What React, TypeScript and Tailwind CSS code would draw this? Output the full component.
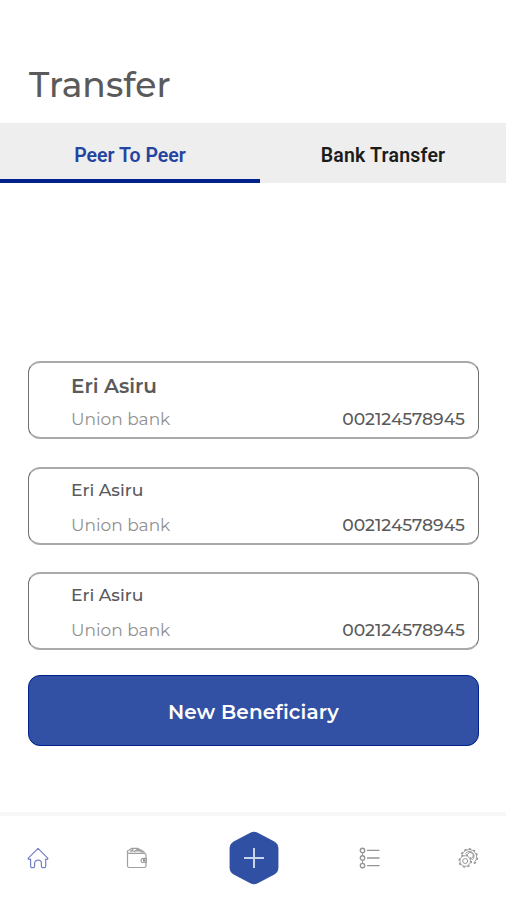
import React from 'react';
import clsx from 'clsx';

const beneficiaries = [
  { id: 1, name: 'Eri Asiru', bank: 'Union bank', account: '002124578945', selected: true },
  { id: 2, name: 'Eri Asiru', bank: 'Union bank', account: '002124578945', selected: false },
  { id: 3, name: 'Eri Asiru', bank: 'Union bank', account: '002124578945', selected: false },
];

const HomeIcon = () => (
  <svg width="22" height="22" viewBox="0 0 22 22" fill="none" stroke="#7480ca" strokeWidth="1.2" strokeLinejoin="round">
    <path d="M1.3 11.2 11 1.4l9.7 9.8c.5.7-.5 1.5-2 .9v7.2c0 .8-.5 1.3-1.3 1.3h-1.7c-.8 0-1.3-.5-1.3-1.3v-3.1c0-4-6.8-4-6.8 0v3.1c0 .8-.5 1.3-1.3 1.3H4.9c-.8 0-1.3-.5-1.3-1.3v-7.2c-1.8.5-2.8-.2-2.3-.9Z" />
  </svg>
);

const WalletIcon = () => (
  <svg width="22" height="22" viewBox="0 0 22 22" fill="none" stroke="#a0a0a0" strokeWidth="1.2" strokeLinejoin="round">
    <path d="M1.5 4.5v14.2c0 1.2.6 1.8 1.8 1.8h14.9c1.1 0 1.8-.6 1.8-1.8V8.2c0-1.2-.6-1.8-1.8-1.8H3.4C1 6.4.8 4 2.4 3.4" />
    <path d="M2.4 3.4 5.5 1.4h6l6.5 3.4v1.6M4.5 5l2.7-3M8 5l3-2.5 5.5 3M4 4h9" />
    <path d="M20.4 11.3h-3.6c-2.2 0-2.2 4.2 0 4.2h3.6Z" />
    <path d="M18 12.2v2.4" stroke="#777" strokeWidth="1.8" />
  </svg>
);

const ListIcon = () => (
  <svg width="22" height="22" viewBox="0 0 22 22" fill="none" stroke="#959595" strokeWidth="1.4">
    <circle cx="3.5" cy="3.4" r="2.2" />
    <circle cx="3.5" cy="11" r="2.2" />
    <circle cx="3.5" cy="18.6" r="2.2" />
    <path d="M3.5 5.6v3.2M3.5 13.2v3.2" strokeWidth="1" />
    <path d="M8 3.4h12.5M8 11h12.5M8 18.6h12.5" />
  </svg>
);

const GearsIcon = () => (
  <svg width="22" height="22" viewBox="0 0 22 22" fill="none" stroke="#8c8c8c">
    <circle cx="7.2" cy="14" r="5.3" strokeWidth=".8" />
    <circle cx="7.2" cy="14" r="6.2" strokeWidth="1.2" strokeDasharray="2.2 2.67" />
    <circle cx="7.2" cy="14" r="2.5" strokeWidth=".9" />
    <path d="M4.2 7.5A7.4 7.4 0 1 1 15.5 16" strokeWidth=".8" />
    <path d="M3.5 7A8.3 8.3 0 1 1 16 17" strokeWidth="1.3" strokeDasharray="2.3 2.3" />
    <path d="M7.5 6.7a4.6 4.6 0 1 1 6.5 6.2M9.4 7.5a3 3 0 1 1 4 3.8" strokeWidth=".9" />
  </svg>
);

const AddButton = () => (
  <button aria-label="Add">
    <svg width="52" height="56" viewBox="0 0 52 56" fill="none">
      <path d="M22.5 3.1Q26 1.1 29.5 3.1L46.5 12Q50 14 50 18v20q0 4-3.5 6L29.5 52.9Q26 54.9 22.5 52.9L5.5 44Q2 42 2 38V18q0-4 3.5-6Z" fill="#3050a3" stroke="#2c4ba1" strokeWidth=".8" />
      <path d="M26 18v20M16 28h20" stroke="#c9d3ec" strokeWidth="2" />
    </svg>
  </button>
);

const App = () => {
  return (
    <div className="flex h-[900px] w-[506px] flex-col bg-white font-['Montserrat','Inter',sans-serif] text-[#5a5a5a]">
      {/* Header */}
      <header className="flex h-[123px] items-end px-[29px] pb-[17px]">
        <h1 className="text-[34.5px] leading-[42px] font-medium tracking-[0.1px] whitespace-nowrap">Transfer</h1>
      </header>

      {/* Tabs */}
      <div className="flex h-[60px] bg-[#eee] font-['Roboto',sans-serif] text-[19.5px] leading-6 font-semibold">
        <button className="flex w-[260px] items-center justify-center border-b-4 border-[#00208b] pt-2.5 text-[#2444a0]">
          Peer To Peer
        </button>
        <button className="flex flex-1 items-center justify-center border-b-4 border-transparent pt-2.5 tracking-[0.2px] text-[#1c1c1c]">
          Bank Transfer
        </button>
      </div>

      {/* Beneficiaries */}
      <main className="flex flex-1 flex-col px-[28px] pt-[178px]">
        <div className="flex flex-col gap-[27.5px]">
          {beneficiaries.map((item) => (
            <div
              key={item.id}
              className="flex h-[78px] w-[451px] flex-col justify-between rounded-[12px] border-x border-y-2 border-x-[#707070] border-y-[#aaa] pt-[10px] pr-[13px] pb-[6px] pl-[42px] whitespace-nowrap"
            >
              <p className={clsx(item.selected ? 'text-[20px] leading-[26px] font-semibold' : 'text-[17.2px] leading-[22px] font-medium')}>
                {item.name}
              </p>
              <div className="flex items-center justify-between text-[17px] leading-6">
                <span className="text-[#909090]">{item.bank}</span>
                <span className="text-[17.2px] font-medium">{item.account}</span>
              </div>
            </div>
          ))}
        </div>

        <button className="mt-[25px] h-[71px] w-[451px] rounded-[12px] border border-[#00208b] bg-[#3250a4] pt-0.5 text-[20px] font-semibold tracking-[0.15px] text-white">
          New Beneficiary
        </button>
      </main>

      {/* Bottom navigation */}
      <nav className="flex h-[88px] items-center justify-between border-t-4 border-[#f7f7f7] pr-[26px] pl-[27px]">
        <HomeIcon />
        <div className="-ml-0.5">
          <WalletIcon />
        </div>
        <AddButton />
        <div className="-mr-0.5">
          <ListIcon />
        </div>
        <GearsIcon />
      </nav>
    </div>
  );
};

export default App;
